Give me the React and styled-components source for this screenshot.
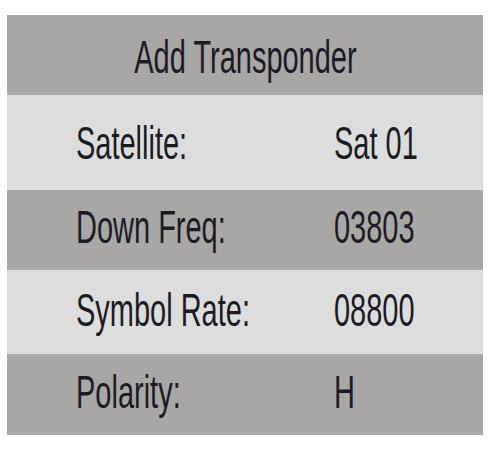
import React from 'react'
import styled, { createGlobalStyle } from 'styled-components'

const GlobalStyle = createGlobalStyle`
  body {
    margin: 0;
    background: #ffffff;
    font-family: "Liberation Sans", Arial, sans-serif;
  }
`

const Panel = styled.div`
  margin: 15px 0 0 7px;
  width: 476px;
  display: flex;
  flex-direction: column;
`

const Header = styled.div`
  height: 80px;
  background: #a8a7a6;
  display: flex;
  align-items: center;
  justify-content: center;
  padding-top: 4px;
  box-sizing: border-box;
`

const Row = styled.div`
  height: ${props => props.h}px;
  background: ${props => (props.dark ? '#a8a7a6' : '#dddddd')};
  display: flex;
  align-items: center;
  padding-bottom: ${props => props.lift || 0}px;
  box-sizing: border-box;
`

const Label = styled.div`
  width: 258px;
  padding-left: 69px;
  flex-shrink: 0;
`

const Value = styled.div`
  flex: 1;
`

const Text = styled.span`
  display: inline-block;
  font-size: 46px;
  line-height: 1;
  color: #1c1b24;
  transform: scaleX(0.63);
  transform-origin: ${props => (props.center ? 'center' : 'left')};
  white-space: nowrap;
`

const rows = [
  { label: 'Satellite:', value: 'Sat 01', h: 95, dark: false, lift: 0 },
  { label: 'Down Freq:', value: '03803', h: 80, dark: true, lift: 6 },
  { label: 'Symbol Rate:', value: '08800', h: 84, dark: false, lift: 4 },
  { label: 'Polarity:', value: 'H', h: 81, dark: true, lift: 6 }
]

export default function App() {
  return (
    <>
      <GlobalStyle />
      <Panel>
        <Header>
          <Text center>Add Transponder</Text>
        </Header>
        {rows.map(r => (
          <Row key={r.label} h={r.h} dark={r.dark} lift={r.lift}>
            <Label>
              <Text>{r.label}</Text>
            </Label>
            <Value>
              <Text>{r.value}</Text>
            </Value>
          </Row>
        ))}
      </Panel>
    </>
  )
}
